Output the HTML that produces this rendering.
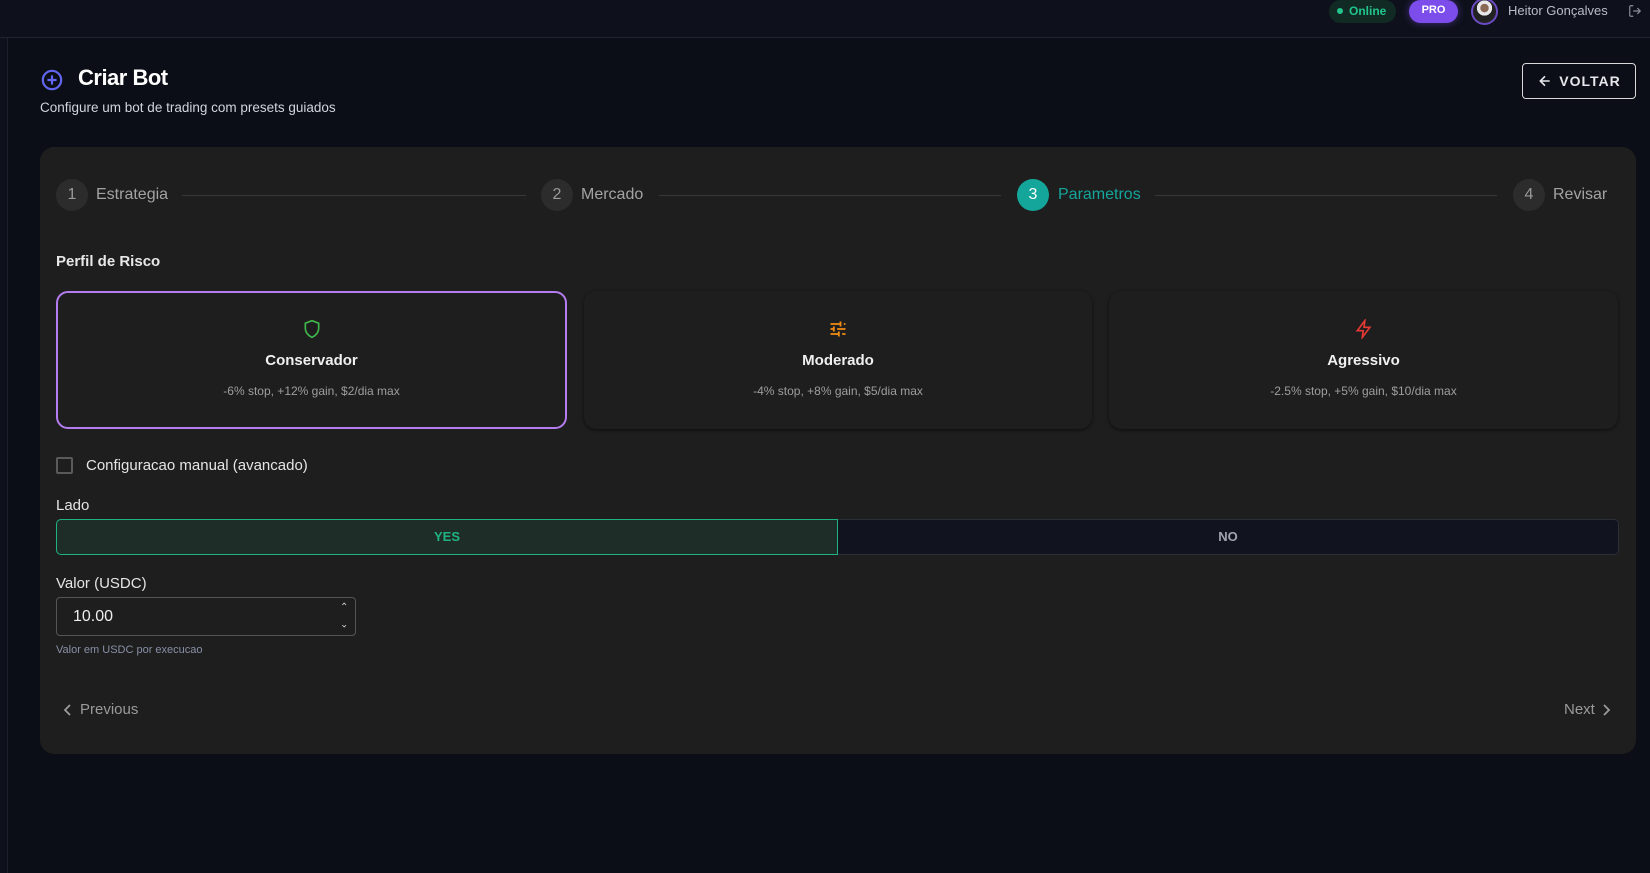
<!DOCTYPE html>
<html><head><meta charset="utf-8"><style>
*{box-sizing:border-box;margin:0;padding:0}
body{width:1650px;height:873px;background:#0b0e16;font-family:"Liberation Sans",sans-serif;color:#e5e7eb;position:relative;overflow:hidden}
.abs{position:absolute}
.top{left:0;top:0;width:1650px;height:38px;background:#0e111b;border-bottom:1px solid #1f2330}
.side{left:0;top:38px;width:8px;height:835px;background:#0e111b;border-right:1px solid #1c202b}
.card{left:40px;top:147px;width:1596px;height:607px;background:#1e1e1e;border-radius:14px}
.circ{width:32px;height:32px;border-radius:50%;background:#2c2c2c;color:#9a9a9a;font-size:16px;display:flex;align-items:center;justify-content:center;top:179px}
.slab{top:186px;font-size:16px;color:#a3a3a3}
.line{top:195px;height:1px;background:#383838}
.rc{top:291px;height:138px;border-radius:12px;background:#1e1e1e;box-shadow:0 1px 3px rgba(0,0,0,.6);text-align:center}
.rc .t{position:absolute;left:0;right:0;top:61px;font-size:15px;font-weight:bold;color:#f0f0f0}
.rc .d{position:absolute;left:0;right:0;top:93px;font-size:12px;color:#9e9e9e}
.rc svg{position:absolute;left:50%;top:28px;margin-left:-10px}
</style></head><body>
<div class="abs top"></div>
<div class="abs side"></div>
<div class="abs" style="left:1329px;top:0;width:67px;height:23px;border-radius:12px;background:#112a24;color:#22c58b;font-size:12px;font-weight:bold;line-height:22px;padding-left:8px"><span style="display:inline-block;width:6px;height:6px;border-radius:50%;background:#22c58b;margin-right:6px;vertical-align:1px"></span>Online</div>
<div class="abs" style="left:1409px;top:0;width:49px;height:23px;border-radius:12px;background:#7c4dea;color:#fff;font-size:11px;font-weight:bold;text-align:center;line-height:20px;box-shadow:0 0 8px rgba(124,77,234,.5)">PRO</div>
<div class="abs" style="left:1471px;top:-2px;width:27px;height:27px;border-radius:50%;border:2px solid #6b4bc4;background:radial-gradient(circle at 50% 35%,#8a6a55 0 22%,#e8e8e8 23% 40%,#222 41%)"></div>
<div class="abs" style="left:1508px;top:3px;font-size:13px;color:#b8bcc8">Heitor Gonçalves</div>
<svg class="abs" style="left:1628px;top:4px" width="14" height="14" viewBox="0 0 24 24" fill="none" stroke="#8a8f9c" stroke-width="2"><path d="M9 21H5a2 2 0 0 1-2-2V5a2 2 0 0 1 2-2h4M16 17l5-5-5-5M21 12H9"/></svg>

<svg class="abs" style="left:41px;top:69px" width="22" height="22" viewBox="0 0 24 24" fill="none" stroke="#6366f1" stroke-width="2.4"><circle cx="12" cy="12" r="10"/><path d="M12 7v10M7 12h10"/></svg>
<div class="abs" style="left:78px;top:65px;font-size:22px;font-weight:bold;color:#fff;letter-spacing:-0.5px">Criar Bot</div>
<div class="abs" style="left:40px;top:100px;font-size:13.5px;color:#d0d4dc">Configure um bot de trading com presets guiados</div>
<div class="abs" style="left:1522px;top:63px;width:114px;height:36px;border:1px solid #d9d9d9;border-radius:4px;font-size:14px;font-weight:bold;letter-spacing:1px;color:#e5e7eb;display:flex;align-items:center;justify-content:center;gap:6px"><svg width="16" height="16" viewBox="0 0 24 24" fill="none" stroke="#e5e7eb" stroke-width="2.4"><path d="M19 12H5M12 5l-7 7 7 7"/></svg>VOLTAR</div>

<div class="abs card"></div>
<div class="abs circ" style="left:56px">1</div><div class="abs slab" style="left:96px">Estrategia</div>
<div class="abs line" style="left:182px;width:344px"></div>
<div class="abs circ" style="left:541px">2</div><div class="abs slab" style="left:581px">Mercado</div>
<div class="abs line" style="left:659px;width:342px"></div>
<div class="abs circ" style="left:1017px;background:#14a69b;color:#fff">3</div><div class="abs slab" style="left:1058px;color:#14a69b">Parametros</div>
<div class="abs line" style="left:1155px;width:342px"></div>
<div class="abs circ" style="left:1513px">4</div><div class="abs slab" style="left:1553px">Revisar</div>

<div class="abs" style="left:56px;top:253px;font-size:15px;font-weight:bold;color:#e8e8e8">Perfil de Risco</div>
<div class="abs rc" style="left:56px;width:511px;border:2px solid #b57cf0;box-shadow:none">
<svg width="20" height="20" viewBox="0 0 24 24" fill="none" stroke="#3fb54a" stroke-width="2" style="top:26px"><path d="M12 2l8 3v6c0 5-3.5 9-8 11-4.5-2-8-6-8-11V5z"/></svg>
<div class="t" style="top:59px">Conservador</div><div class="d" style="top:91px">-6% stop, +12% gain, $2/dia max</div></div>
<div class="abs rc" style="left:584px;width:508px">
<svg width="20" height="20" viewBox="0 0 24 24" fill="none" stroke="#f28c14" stroke-width="2.2"><path d="M3 6h12M19 6h2M15 3v6M3 12h4M11 12h10M7 9v6M3 18h10M17 18h4M13 15v6"/></svg>
<div class="t">Moderado</div><div class="d">-4% stop, +8% gain, $5/dia max</div></div>
<div class="abs rc" style="left:1109px;width:509px">
<svg width="20" height="20" viewBox="0 0 24 24" fill="none" stroke="#e53935" stroke-width="2"><path d="M13 2L4 14h7l-1 8 9-12h-7z"/></svg>
<div class="t">Agressivo</div><div class="d">-2.5% stop, +5% gain, $10/dia max</div></div>

<div class="abs" style="left:56px;top:457px;width:17px;height:17px;border:2px solid #5a5a5a;border-radius:2px"></div>
<div class="abs" style="left:86px;top:457px;font-size:15px;color:#e5e5e5">Configuracao manual (avancado)</div>

<div class="abs" style="left:56px;top:497px;font-size:15px;color:#e5e5e5">Lado</div>
<div class="abs" style="left:56px;top:519px;width:782px;height:36px;background:#1f2d28;border:1px solid #1fb37f;border-radius:5px 0 0 5px;color:#1fb37f;font-size:13px;font-weight:bold;text-align:center;line-height:34px">YES</div>
<div class="abs" style="left:838px;top:519px;width:781px;height:36px;background:#11141e;border:1px solid #2a2e38;border-left:none;border-radius:0 5px 5px 0;color:#a0a4ae;font-size:13px;font-weight:bold;text-align:center;line-height:34px">NO</div>

<div class="abs" style="left:56px;top:575px;font-size:15px;color:#e5e5e5">Valor (USDC)</div>
<div class="abs" style="left:56px;top:597px;width:300px;height:39px;border:1px solid #555;border-radius:4px;font-size:16px;color:#eee;padding:10px 0 0 16px">10.00</div>
<div class="abs" style="left:340px;top:600px;font-size:10px;color:#ccc;line-height:15px">&#8963;<br><span style="display:inline-block;transform:rotate(180deg)">&#8963;</span></div>
<div class="abs" style="left:56px;top:644px;font-size:11px;color:#8890a6">Valor em USDC por execucao</div>

<svg class="abs" style="left:62px;top:703px" width="12" height="14" viewBox="0 0 12 14" fill="none" stroke="#9a9a9a" stroke-width="1.8"><path d="M8 2L3 7l5 5"/></svg>
<div class="abs" style="left:80px;top:701px;font-size:15px;color:#9a9a9a">Previous</div>
<div class="abs" style="left:1564px;top:701px;font-size:15px;color:#9a9a9a">Next</div>
<svg class="abs" style="left:1600px;top:703px" width="12" height="14" viewBox="0 0 12 14" fill="none" stroke="#9a9a9a" stroke-width="1.8"><path d="M4 2l5 5-5 5"/></svg>
</body></html>
